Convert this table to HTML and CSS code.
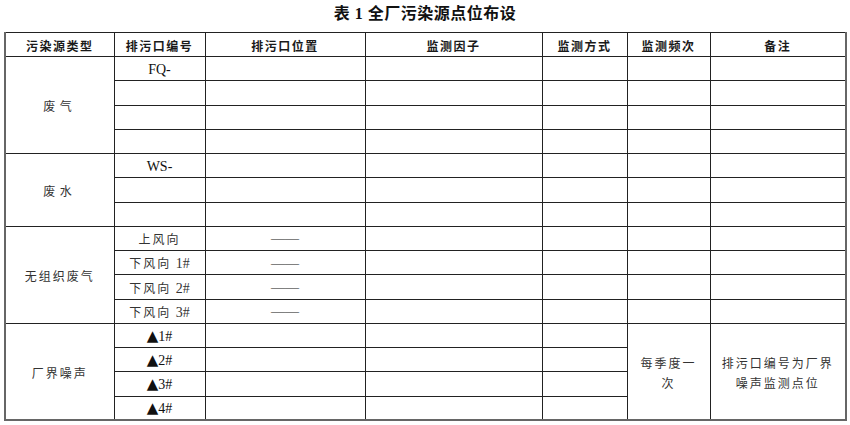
FILE: index.html
```html
<!DOCTYPE html>
<html lang="zh-CN">
<head>
<meta charset="utf-8">
<link rel="stylesheet" href="styles.css">
</head>
<body>
<div class="page">
  <h1 class="title">表 1 全厂污染源点位布设</h1>
  <table class="grid">
    <colgroup>
      <col class="c1"><col class="c2"><col class="c3"><col class="c4"><col class="c5"><col class="c6"><col class="c7">
    </colgroup>
    <thead>
      <tr class="head">
        <th>污染源类型</th><th>排污口编号</th><th>排污口位置</th><th>监测因子</th><th>监测方式</th><th>监测频次</th><th>备注</th>
      </tr>
    </thead>
    <tbody>
      <tr><td rowspan="4" class="cat wide">废气</td><td class="lat">FQ-</td><td></td><td></td><td></td><td></td><td></td></tr>
      <tr><td></td><td></td><td></td><td></td><td></td><td></td></tr>
      <tr><td></td><td></td><td></td><td></td><td></td><td></td></tr>
      <tr><td></td><td></td><td></td><td></td><td></td><td></td></tr>
      <tr><td rowspan="3" class="cat wide">废水</td><td class="lat">WS-</td><td></td><td></td><td></td><td></td><td></td></tr>
      <tr><td></td><td></td><td></td><td></td><td></td><td></td></tr>
      <tr><td></td><td></td><td></td><td></td><td></td><td></td></tr>
      <tr><td rowspan="4" class="cat">无组织废气</td><td class="cjk">上风向</td><td class="dash">——</td><td></td><td></td><td></td><td></td></tr>
      <tr><td class="cjk">下风向 <span class="num">1#</span></td><td class="dash">——</td><td></td><td></td><td></td><td></td></tr>
      <tr><td class="cjk">下风向 <span class="num">2#</span></td><td class="dash">——</td><td></td><td></td><td></td><td></td></tr>
      <tr><td class="cjk">下风向 <span class="num">3#</span></td><td class="dash">——</td><td></td><td></td><td></td><td></td></tr>
      <tr><td rowspan="4" class="cat">厂界噪声</td><td class="lat"><span class="tri">▲</span>1#</td><td></td><td></td><td></td><td rowspan="4" class="note">每季度一<br>次</td><td rowspan="4" class="note">排污口编号为厂界<br>噪声监测点位</td></tr>
      <tr><td class="lat"><span class="tri">▲</span>2#</td><td></td><td></td><td></td></tr>
      <tr><td class="lat"><span class="tri">▲</span>3#</td><td></td><td></td><td></td></tr>
      <tr><td class="lat"><span class="tri">▲</span>4#</td><td></td><td></td><td></td></tr>
    </tbody>
  </table>
</div>
</body>
</html>
```

FILE: styles.css
```css
html, body {
  margin: 0;
  padding: 0;
  background: #ffffff;
}

.page {
  padding: 0 4px 0 4px;
  font-family: "Liberation Serif", "Noto Sans CJK SC", serif;
  color: #222222;
}

.title {
  margin: 0;
  height: 32px;
  line-height: 28px;
  text-align: center;
  font-family: "Liberation Serif", "Noto Sans CJK SC", serif;
  font-size: 16px;
  font-weight: 700;
  color: #111111;
  letter-spacing: 0.5px;
}

.grid {
  width: 841px;
  table-layout: fixed;
  border-collapse: collapse;
  border-top: 1px solid #222222;
  border-left: 2px solid #666666;
  border-right: 2px solid #666666;
  border-bottom: 2px solid #666666;
}

.c1 { width: 109px; }
.c2 { width: 91px; }
.c3 { width: 160px; }
.c4 { width: 177px; }
.c5 { width: 85px; }
.c6 { width: 83px; }
.c7 { width: 136px; }

.grid th,
.grid td {
  border: 1px solid #222222;
  padding: 2px 0 0 0;
  text-align: center;
  vertical-align: middle;
}

.head {
  height: 24px;
}

.head th {
  font-family: "Noto Sans CJK SC", sans-serif;
  font-size: 12px;
  font-weight: 700;
  letter-spacing: 1.5px;
  line-height: 20px;
  color: #1a1a1a;
}

.grid tbody tr {
  height: 24.27px;
}

.grid td {
  line-height: 20px;
}

.cat,
.cjk,
.note {
  font-family: "Noto Sans CJK SC", sans-serif;
  font-size: 12px;
  letter-spacing: 2px;
  color: #333333;
}

.cat.wide {
  letter-spacing: 4.5px;
}

.note {
  line-height: 24px;
}

.num {
  font-family: "Liberation Serif", serif;
  font-size: 14px;
  letter-spacing: 0;
}

.lat {
  font-family: "Liberation Serif", serif;
  font-size: 14px;
  color: #111111;
}

.tri {
  font-family: "DejaVu Sans", sans-serif;
  font-size: 15px;
  line-height: 1;
}

.dash {
  font-family: "Liberation Serif", serif;
  font-size: 14px;
  color: #111111;
}
```
